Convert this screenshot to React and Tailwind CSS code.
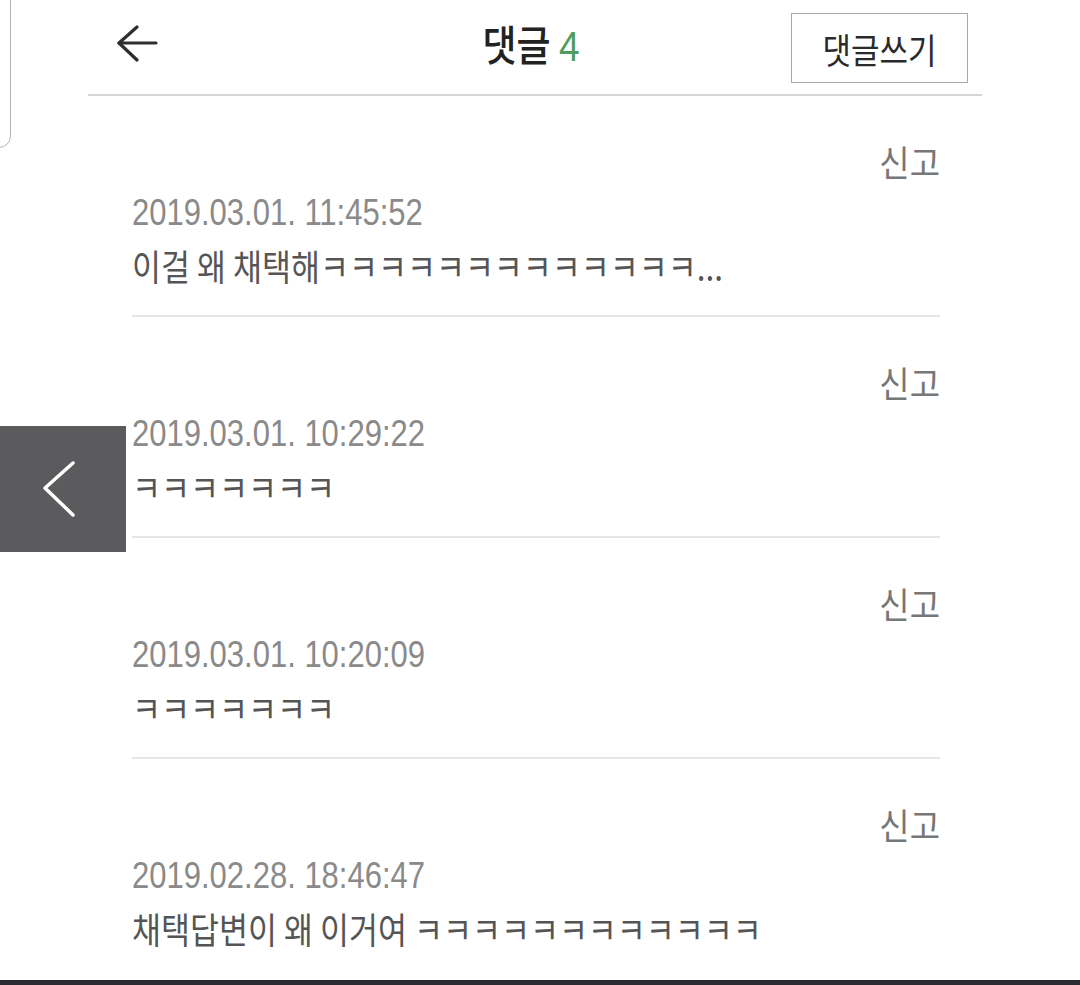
import React from "react";

const rows = [
  { date: "2019.03.01. 11:45:52", text: "이걸 왜 채택해ㅋㅋㅋㅋㅋㅋㅋㅋㅋㅋㅋㅋㅋ..." },
  { date: "2019.03.01. 10:29:22", text: "ㅋㅋㅋㅋㅋㅋㅋ" },
  { date: "2019.03.01. 10:20:09", text: "ㅋㅋㅋㅋㅋㅋㅋ" },
  { date: "2019.02.28. 18:46:47", text: "채택답변이 왜 이거여 ㅋㅋㅋㅋㅋㅋㅋㅋㅋㅋㅋㅋ", last: true },
];

const kr = { fontFamily: '"Noto Sans CJK KR", "Noto Sans", sans-serif' };
const lat = { fontFamily: '"Liberation Sans", "Noto Sans CJK KR", sans-serif' };

export default function App() {
  return (
    <div className="relative w-[1080px] h-[985px] overflow-hidden bg-white flex flex-col">
      {/* left frame fragment */}
      <div className="absolute left-[-20px] top-[-20px] w-[31px] h-[168px] border border-[#b4b4b4] rounded-br-[12px]" />

      {/* header */}
      <div className="ml-[88px] w-[894px] h-[96px] border-b-2 border-[#d6d6d6] grid grid-cols-3 items-center shrink-0">
        <div className="flex items-center pl-[28px] pb-[4px]">
          <svg width="44" height="40" viewBox="0 0 44 40" fill="none" stroke="#2e2e2e" strokeWidth="3.2" strokeLinecap="round" strokeLinejoin="round">
            <path d="M3 18 H40" />
            <path d="M21 2 L3 18 L21 35" />
          </svg>
        </div>
        <div className="flex justify-center pr-[8px] pb-[4px]">
          <span className="inline-block scale-y-[1.15] text-[37px] font-medium text-[#222] leading-none whitespace-nowrap" style={kr}>
            댓글 <span className="text-[#4f9d5d] font-normal" style={lat}>4</span>
          </span>
        </div>
        <div className="flex justify-end pr-[14px] pt-[2px]">
          <div className="w-[177px] h-[70px] border border-[#a8a8a8] flex items-center justify-center">
            <span className="inline-block scale-y-[1.15] text-[31px] text-[#2a2a2a] leading-none whitespace-nowrap" style={kr}>댓글쓰기</span>
          </div>
        </div>
      </div>

      {/* rows */}
      <div className="ml-[132px] w-[808px] flex flex-col">
        {rows.map((r, i) => (
          <div key={i} className={`flex flex-col pt-[46px] h-[221px] ${r.last ? "" : "border-b-2 border-[#e6e6e6]"}`}>
            <div className="h-[40px] flex items-center justify-end">
              <span className="inline-block scale-y-[1.1] text-[33px] text-[#777] leading-none whitespace-nowrap" style={kr}>신고</span>
            </div>
            <div className="h-[40px] mt-[10px] flex items-center">
              <span className="inline-block scale-y-[1.2] text-[31px] text-[#8a8a8a] leading-none whitespace-nowrap" style={lat}>{r.date}</span>
            </div>
            <div className="h-[40px] mt-[14px] flex items-center">
              <span className="inline-block scale-y-[1.15] text-[31.5px] text-[#555] leading-none whitespace-nowrap" style={kr}>{r.text}</span>
            </div>
          </div>
        ))}
      </div>

      {/* left nav overlay */}
      <div className="absolute left-0 top-[426px] w-[126px] h-[126px] bg-[#5b5b5d]">
        <svg width="126" height="126" viewBox="0 0 126 126" fill="none" stroke="#fff" strokeWidth="3.5" strokeLinecap="round" strokeLinejoin="round">
          <path d="M73 37 L45 62 L73 89" />
        </svg>
      </div>

      {/* bottom bar */}
      <div className="absolute left-0 bottom-0 w-[1080px] h-[5px] bg-[#2a2a30]" />
    </div>
  );
}
